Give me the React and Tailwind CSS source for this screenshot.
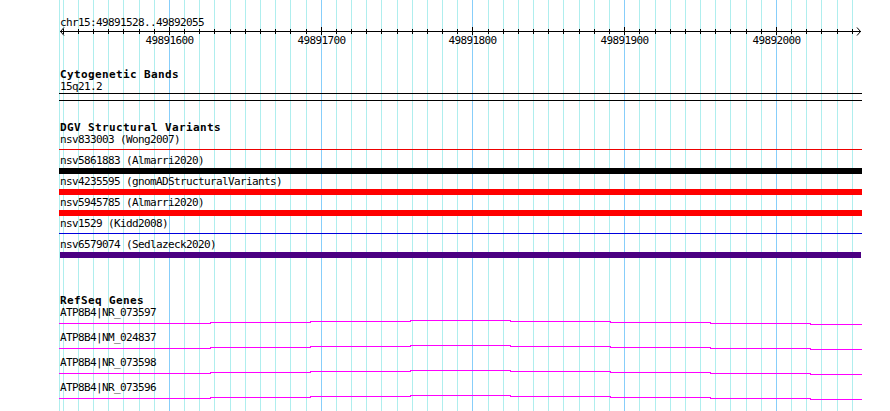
import React from 'react';

const mono = "font-['DejaVu_Sans_Mono','Liberation_Mono',monospace]";

// ten-base grid, 49891530 .. 49892050
const gridX = Array.from({ length: 53 }, (_, k) => ({
    x: Math.round(62.7 + 15.175 * k),
    major: k % 10 === 7,
    bp: 49891530 + k * 10,
}));

const variants = [
    { label: 'nsv833003 (Wong2007)', color: 'bg-[#ee0000]', thin: true },
    { label: 'nsv5861883 (Almarri2020)', color: 'bg-black' },
    { label: 'nsv4235595 (gnomADStructuralVariants)', color: 'bg-[#ff0000]' },
    { label: 'nsv5945785 (Almarri2020)', color: 'bg-[#ff0000]' },
    { label: 'nsv1529 (Kidd2008)', color: 'bg-[#0000dd]', thin: true },
    { label: 'nsv6579074 (Sedlazeck2020)', color: 'bg-[#4b0082]', short: true },
];

const genes = ['ATP8B4|NR_073597', 'ATP8B4|NM_024837', 'ATP8B4|NR_073598', 'ATP8B4|NR_073596'];

// shallow intron hat, [x1, x2, y]
const hat = [
    [59, 210, 4], [210, 310, 3], [310, 410, 2], [410, 510, 1],
    [510, 610, 2], [610, 710, 3], [710, 810, 4], [810, 861, 5],
];

function Grid() {
    return (
        <svg className="absolute inset-0" width="890" height="411" shapeRendering="crispEdges">
            <rect x="59" y="0" width="1" height="411" fill="#afeeee" />
            {gridX.map((g) => (
                <rect key={g.x} x={g.x} y="0" width="1" height="411" fill={g.major ? '#87cefa' : '#afeeee'} />
            ))}
        </svg>
    );
}

function Ruler() {
    return (
        <svg width="890" height="46" className="block" fontFamily="DejaVu Sans Mono, monospace" fontSize="11" letterSpacing="-0.62">
            <text x="60" y="26" fill="#000">chr15:49891528..49892055</text>
            <g shapeRendering="crispEdges">
                <rect x="60" y="31" width="801" height="1" fill="#000" />
                {gridX.map((g) => (
                    <rect key={g.x} x={g.x} y={g.major ? 27 : 29} width="1" height={g.major ? 8 : 5} fill="#000" />
                ))}
            </g>
            <polyline points="64,27.5 60.5,31.5 64,35.5" fill="none" stroke="#000" strokeWidth="1" />
            <polyline points="857,27.5 860.5,31.5 857,35.5" fill="none" stroke="#000" strokeWidth="1" />
            {gridX.filter((g) => g.major).map((g) => (
                <text key={g.bp} x={g.x - 23.5} y="44" fill="#000">{g.bp}</text>
            ))}
        </svg>
    );
}

const Title = ({ children }) => (
    <div className="ml-[60px] h-[12px] leading-[12px] text-[11px] font-bold tracking-[0.38px] text-black whitespace-nowrap">
        {children}
    </div>
);

const Label = ({ children }) => (
    <div className="ml-[60px] h-[12px] leading-[12px] text-[11px] tracking-[-0.62px] text-black whitespace-nowrap">{children}</div>
);

export default function App() {
    return (
        <div className={`relative w-[890px] h-[411px] overflow-hidden bg-white ${mono}`}>
            <Grid />
            <div className="relative flex flex-col">
                <Ruler />

                <div className="mt-[23px] flex flex-col">
                    <Title>Cytogenetic Bands</Title>
                    <Label>15q21.2</Label>
                    <div className="ml-[59px] w-[803px] h-[8px] border-y border-black" />
                </div>

                <div className="mt-[21px] flex flex-col">
                    <Title>DGV Structural Variants</Title>
                    {variants.map((v) => (
                        <div key={v.label} className="h-[21px] flex flex-col">
                            <Label>{v.label}</Label>
                            {v.thin ? (
                                <div className={`mt-[3px] h-[1px] ml-[59px] w-[803px] ${v.color}`} />
                            ) : (
                                <div className={`mt-[1px] h-[6px] ${v.short ? 'ml-[60px] w-[801px]' : 'ml-[59px] w-[803px]'} ${v.color}`} />
                            )}
                        </div>
                    ))}
                </div>

                <div className="mt-[35px] flex flex-col">
                    <Title>RefSeq Genes</Title>
                    {genes.map((g) => (
                        <div key={g} className="h-[25px] flex flex-col">
                            <Label>{g}</Label>
                            <svg width="890" height="13" className="block" shapeRendering="crispEdges">
                                {hat.map(([x1, x2, y]) => (
                                    <rect key={x1} x={x1} y={y} width={x2 - x1 + 1} height="1" fill="#ff00ff" />
                                ))}
                            </svg>
                        </div>
                    ))}
                </div>
            </div>
        </div>
    );
}
